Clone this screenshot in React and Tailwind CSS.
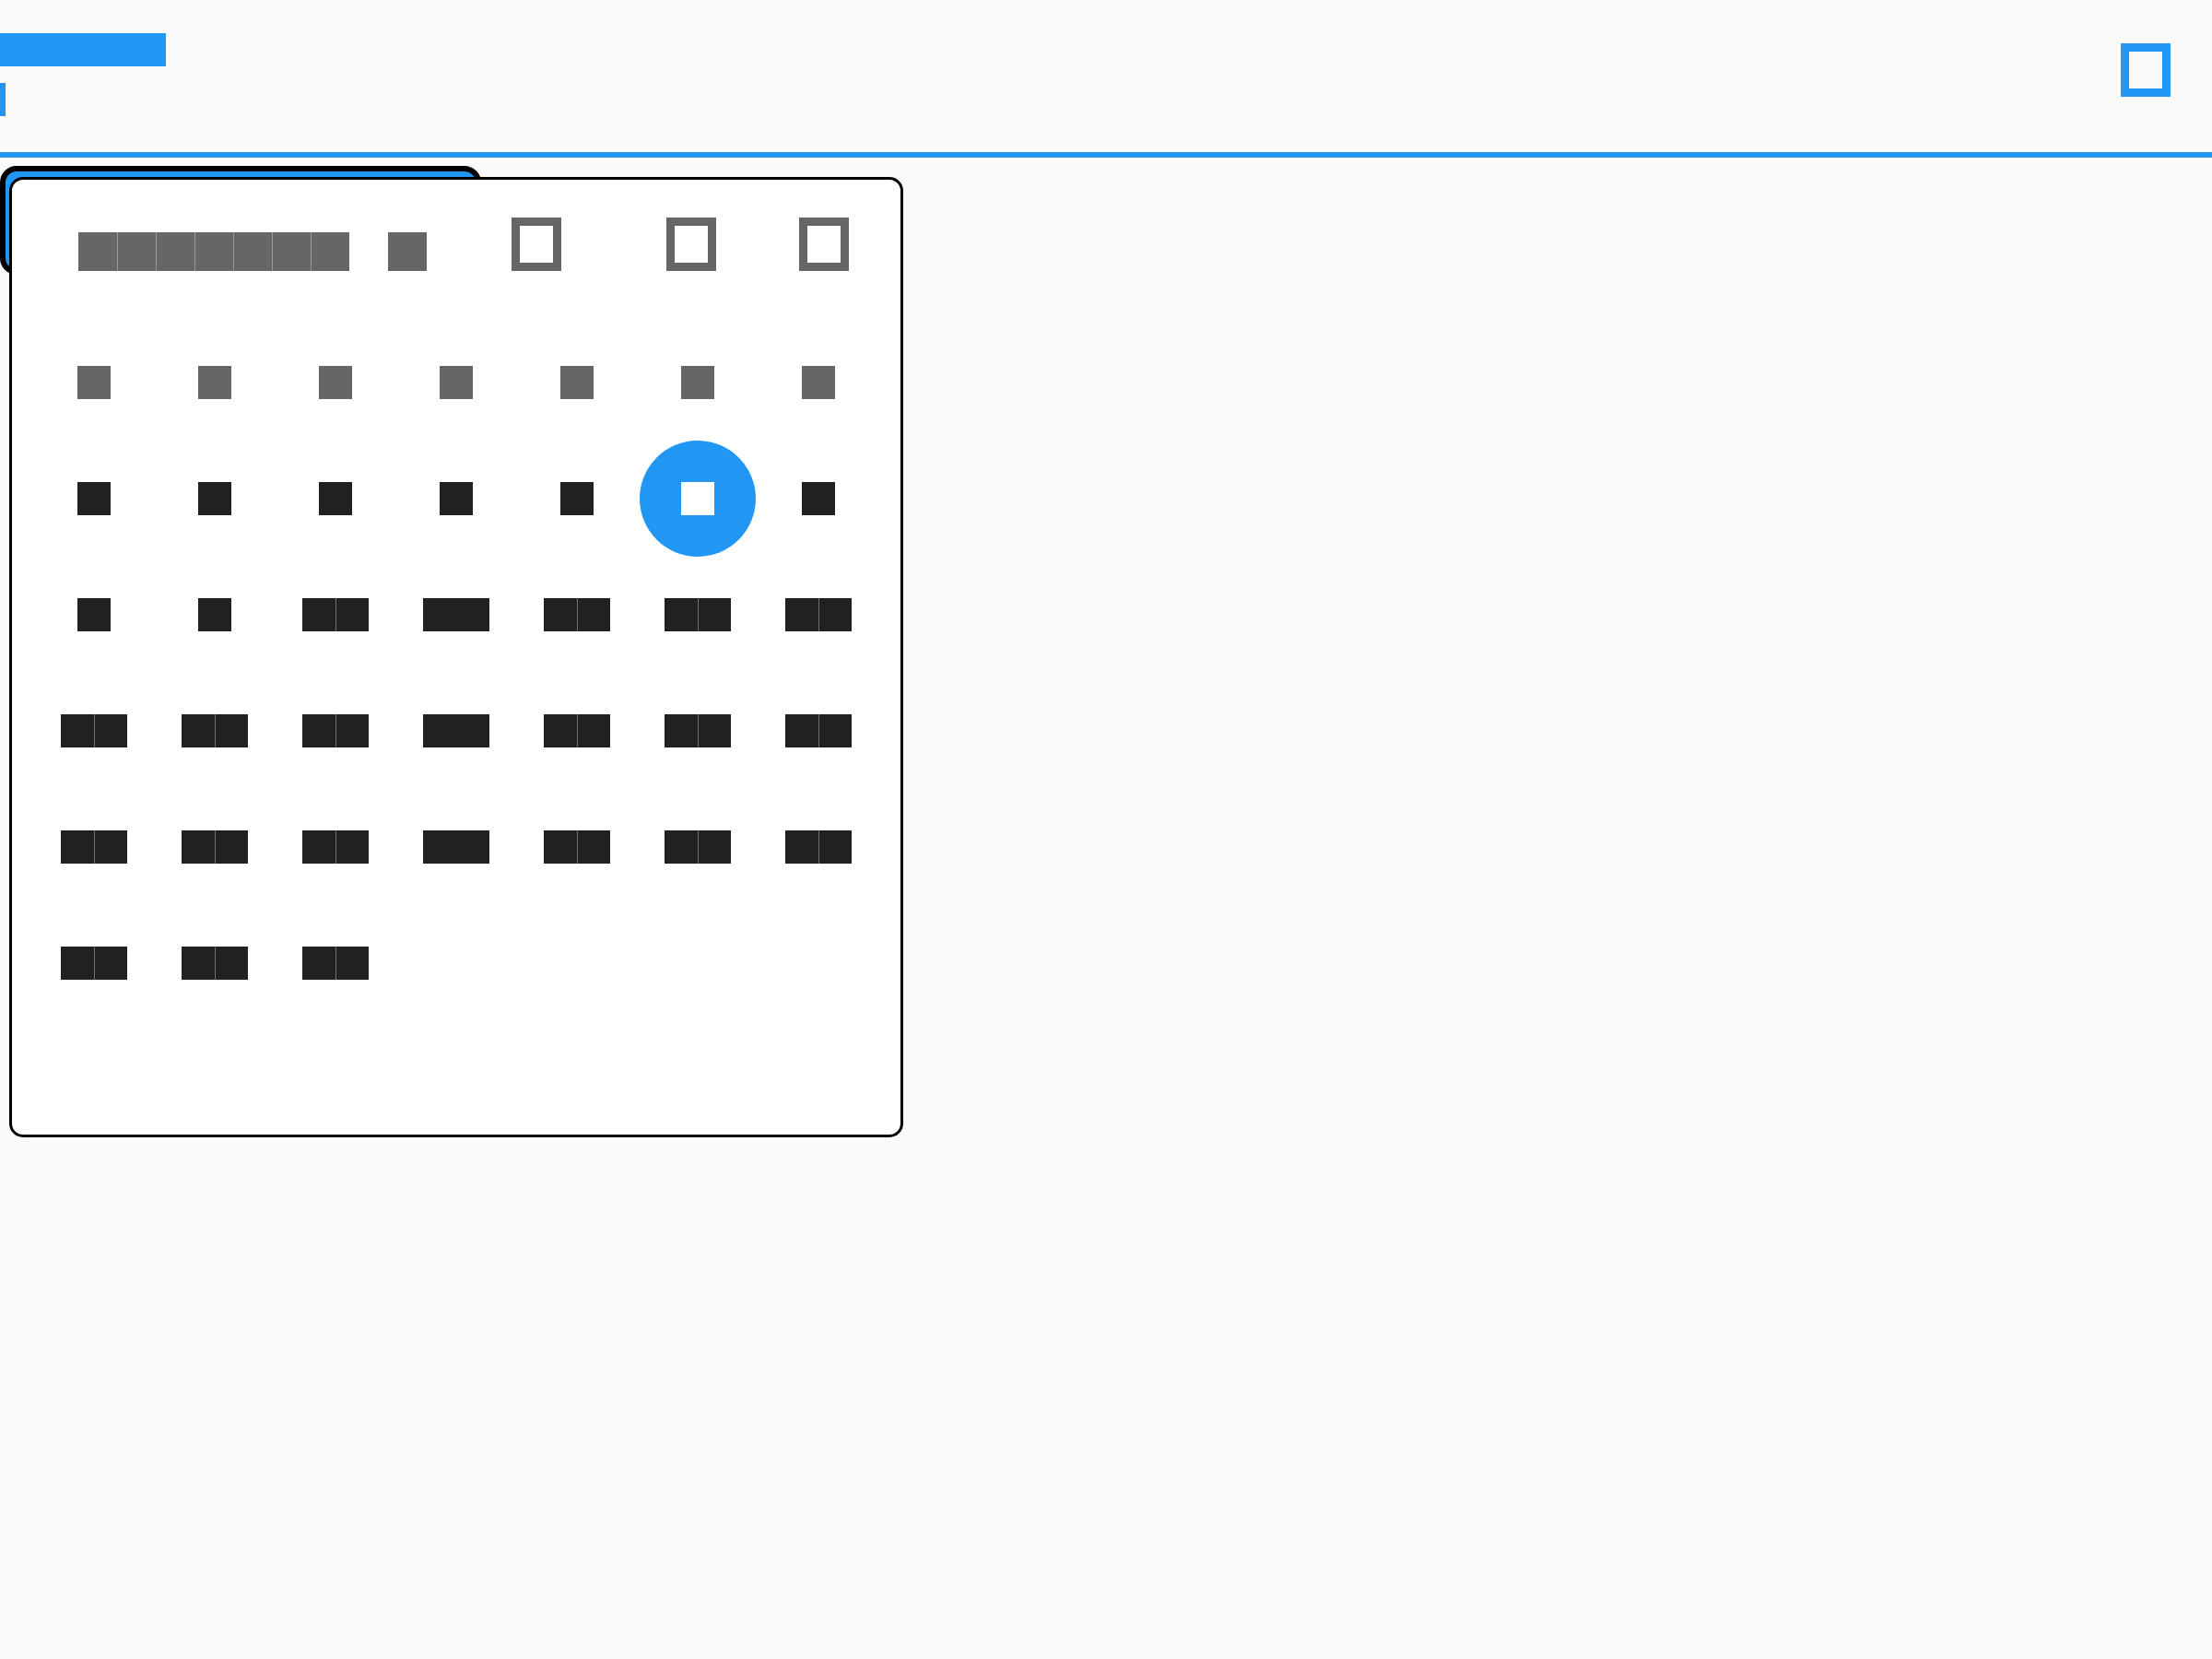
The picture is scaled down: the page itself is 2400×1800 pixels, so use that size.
import React from 'react'

// each character is drawn as a full-em block, the way the test font renders it
const Glyphs = ({ text, box, seam = true }) => (
    <span className="inline-flex leading-none">
        {text.split('').map((ch, i) => (
            <span
                key={i}
                className={
                    'inline-flex items-center justify-center w-[1em] h-[1em] ' +
                    (ch === ' ' ? 'text-transparent' : box) +
                    (seam && i > 0 && text[i - 1] !== ' ' && ch !== ' ' ? ' shadow-[inset_1px_0_0_rgba(255,255,255,0.35)]' : '')
                }
            >
                <span className="text-[0.6em] leading-none">{ch === ' ' ? '\u00a0' : ch}</span>
            </span>
        ))}
    </span>
)

const MissingIcon = ({ className }) => (
    <div className={'w-[54px] h-[58px] border-[9px] ' + className} />
)

const weekdays = ['S', 'M', 'T', 'W', 'T', 'F', 'S']
const days = Array.from({ length: 31 }, (_, i) => i + 1)
const selected = 6

const App = () => {
    return (
        <div className="relative w-[2400px] h-[1800px] overflow-hidden bg-[#fafafa] font-['Liberation_Sans',sans-serif]">
            {/* App bar */}
            <header className="flex justify-between h-[165px]">
                <div className="flex flex-col pt-[36px]">
                    <div className="flex text-[36px] leading-none">
                        <Glyphs text="Title" box="bg-[#2196F3] text-[#2196F3]" seam={false} />
                    </div>
                    <div className="mt-[18px] w-[6px] h-[36px] bg-[#2196F3]" />
                </div>
                <div className="pt-[47px] pr-[45px]">
                    <MissingIcon className="border-[#2196F3]" />
                </div>
            </header>
            <div className="h-[6px] bg-[#2196F3]" />

            {/* Field button under the popup */}
            <div className="mt-[9px] w-[522px] h-[118px] border-[6px] border-black rounded-[18px] bg-[#2196F3]" />

            {/* Calendar popup */}
            <div className="absolute left-[10px] top-[192px] w-[970px] h-[1042px] border-[3px] border-black rounded-[15px] bg-white">
                <div className="flex items-end h-[58px] mt-[41px] pl-[72px]">
                    <div className="flex text-[42px] leading-none">
                        <Glyphs text="January 1" box="bg-[#666666] text-[#666666]" />
                    </div>
                    <MissingIcon className="ml-[92px] border-[#666666]" />
                    <MissingIcon className="ml-[114px] border-[#666666]" />
                    <MissingIcon className="ml-[90px] border-[#666666]" />
                </div>

                <div className="mt-[58px] ml-[23px] w-[917px] grid grid-cols-7 text-[36px] leading-none">
                    {weekdays.map((d, i) => (
                        <div key={'w' + i} className="h-[126px] flex items-center justify-center">
                            <Glyphs text={d} box="bg-[#666666] text-[#666666]" />
                        </div>
                    ))}
                    {days.map((d) => (
                        <div key={d} className="h-[126px] flex items-center justify-center">
                            {d === selected ? (
                                <div className="w-[126px] h-[126px] rounded-full bg-[#2196F3] flex items-center justify-center">
                                    <Glyphs text={String(d)} box="bg-white text-white" />
                                </div>
                            ) : (
                                <Glyphs
                                    text={String(d)}
                                    box="bg-[#212121] text-[#212121]"
                                    seam={(d - 1) % 7 !== 3}
                                />
                            )}
                        </div>
                    ))}
                </div>
            </div>
        </div>
    )
}

export default App
